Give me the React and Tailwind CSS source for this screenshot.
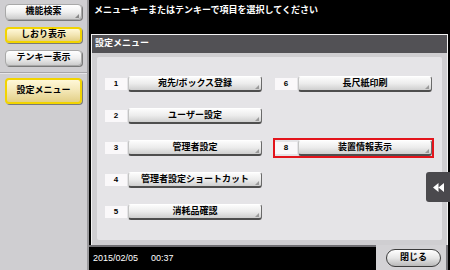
const sideButtons = [
  { label: "機能検索", active: false, mark: true },
  { label: "しおり表示", active: true },
  { label: "テンキー表示", active: false },
];

const menuItems = [
  { n: "1", label: "宛先/ボックス登録", pos: "col-start-1 row-start-1" },
  { n: "2", label: "ユーザー設定", pos: "col-start-1 row-start-2" },
  { n: "3", label: "管理者設定", pos: "col-start-1 row-start-3" },
  { n: "4", label: "管理者設定ショートカット", pos: "col-start-1 row-start-4" },
  { n: "5", label: "消耗品確認", pos: "col-start-1 row-start-5" },
  { n: "6", label: "長尺紙印刷", pos: "col-start-2 row-start-1" },
  { n: "8", label: "装置情報表示", pos: "col-start-2 row-start-3", selected: true },
];

function SideButton({ label, active, tall, mark }) {
  const base =
    "relative flex items-center justify-center rounded-[4px] text-[9px] font-bold text-black shadow-[1px_1px_0_#7a7a7a]";
  const look = active
    ? " border-2 border-[#f2d400] bg-linear-to-b from-[#fff8d8] via-[#f3e6b4] to-[#e2cf86]"
    : " border border-[#a8a8a8] bg-linear-to-b from-[#ffffff] via-[#f0f0f0] to-[#cdcdcd]";
  return (
    <div className={base + look + (tall ? " h-[26px]" : " h-[16px]")}>
      {label}
      {mark && (
        <span className="absolute right-[2px] bottom-[1px] w-0 h-0 border-l-[4px] border-l-transparent border-b-[4px] border-b-[#8a8a8a]" />
      )}
    </div>
  );
}

function MenuItem({ n, label, pos, selected }) {
  return (
    <div
      className={
        pos +
        " flex items-center h-[16px]" +
        (selected ? " outline-2 outline-[#e3141c]" : "")
      }
    >
      <div className="w-[22px] h-[12px] bg-[#faf8fa] flex items-center justify-center text-[8px] font-bold text-black">
        {n}
      </div>
      <div className="relative flex-1 h-[16px] ml-[1px] rounded-[3px] bg-linear-to-b from-[#fcfcfc] via-[#ececec] to-[#cfcfcf] border-t border-t-[#ffffff] border-l border-l-[#c4c4c4] border-r border-r-[#6a6a6a] border-b-2 border-b-[#4e4e4e] flex items-center justify-center text-[9px] font-bold text-black">
        {label}
        <span className="absolute right-[2px] bottom-[1px] w-0 h-0 border-l-[4px] border-l-transparent border-b-[4px] border-b-[#9a9a9a]" />
      </div>
    </div>
  );
}

export default function App() {
  return (
    <div className="w-[450px] h-[270px] flex bg-black overflow-hidden font-['Liberation_Sans','Noto_Sans_CJK_JP',sans-serif]">
      {/* 左メニュー */}
      <div className="w-[89px] h-full bg-[#cfced1] border-r-2 border-r-[#9b9a9d] flex flex-col px-[5px] pt-[4px]">
        <div className="flex flex-col gap-[7px]">
          {sideButtons.map((b) => (
            <SideButton key={b.label} {...b} />
          ))}
        </div>
        <div className="mt-[6px] -mx-[5px] h-[2px] border-t border-t-[#a6a5a8] bg-[#e6e5e8]" />
        <div className="mt-[4px]">
          <SideButton label="設定メニュー" active tall />
        </div>
      </div>

      {/* メイン */}
      <div className="flex-1 flex flex-col">
        <div className="h-[34px] pl-[5px] pt-[4px] text-white text-[9px] font-bold leading-[12px]">
          メニューキーまたはテンキーで項目を選択してください
        </div>

        <div className="relative flex-1 mx-[2px] border border-[#f2f2f2] border-b-0 bg-[#cfced1] flex flex-col">
          <div className="h-[18px] bg-[#525155] flex items-center pl-[3px] text-white text-[9px] font-bold">
            設定メニュー
          </div>
          <div className="flex-1 px-[5px] pt-[4px] pb-[5px]">
            <div className="h-full bg-[#e5e4e7] rounded-[2px] pl-[8px] pt-[19px]">
              <div className="grid grid-cols-[157px_157px] grid-rows-[16px_16px_16px_16px_16px] gap-x-[13px] gap-y-[16px]">
                {menuItems.map((m) => (
                  <MenuItem key={m.n} {...m} />
                ))}
              </div>
            </div>
          </div>
          {/* 折りたたみタブ */}
          <div className="absolute right-[-3px] top-[137px] w-[24px] h-[30px] rounded-l-[3px] bg-[#4a494d] flex items-center justify-center">
            <svg width="11" height="9" viewBox="0 0 11 9">
              <path d="M0 4.5 L5.5 0 V9 Z M5.5 4.5 L11 0 V9 Z" fill="#ffffff" />
            </svg>
          </div>
        </div>

        <div className="h-[25px] flex">
          <div className="flex-1 border-t-2 border-t-[#6f6e72] flex items-center pl-[4px] gap-[13px] text-white text-[9px] leading-none">
            <span>2015/02/05</span>
            <span>00:37</span>
          </div>
          <div className="w-[72px] mr-[2px] bg-[#d3d2d5] border-r-2 border-r-[#77767a] flex items-center justify-center pl-[5px]">
            <div className="w-[55px] h-[18px] rounded-full border-[1.5px] border-[#3c3c3c] bg-linear-to-b from-[#ffffff] via-[#e6e6e6] to-[#b9b9b9] flex items-center justify-center text-[9px] font-bold text-black">
              閉じる
            </div>
          </div>
        </div>
      </div>
    </div>
  );
}
